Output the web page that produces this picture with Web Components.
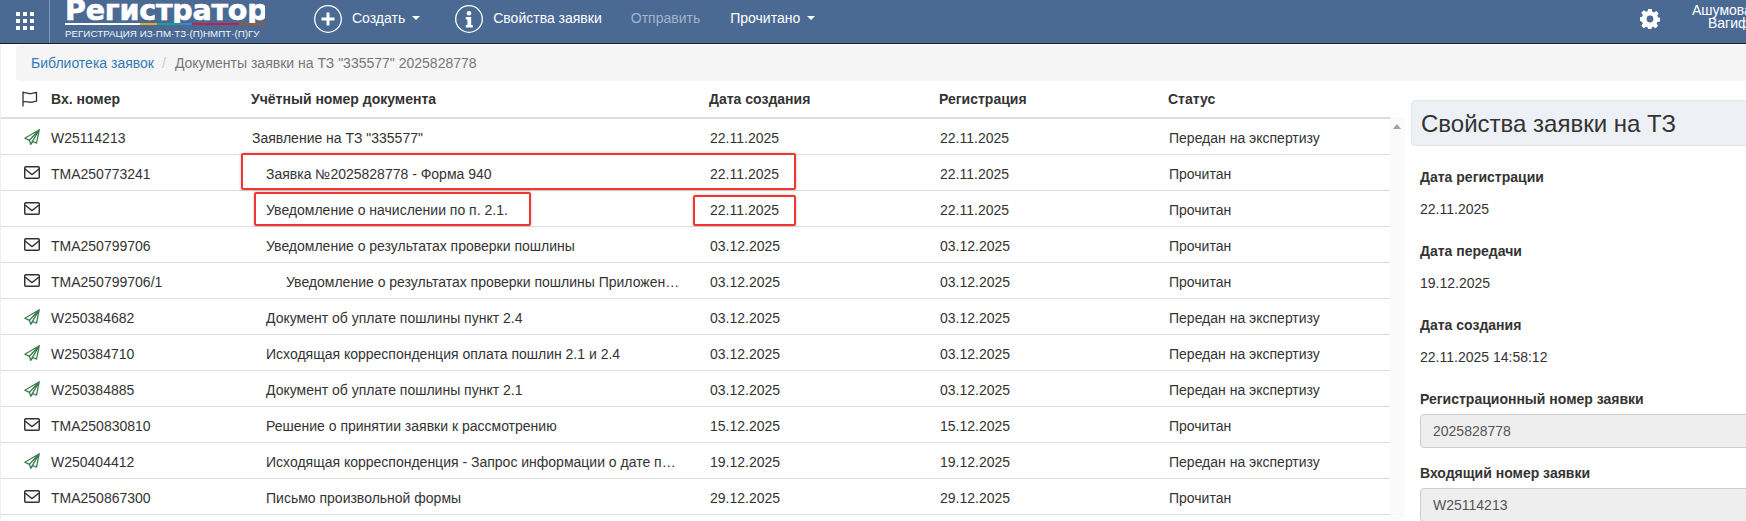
<!DOCTYPE html>
<html lang="ru">
<head>
<meta charset="utf-8">
<title>Документы заявки</title>
<style>
    html, body { margin: 0; height: 521px; overflow: hidden; background: #fff; }
    body { font: 14px/20px "Liberation Sans", Arial, sans-serif; color: #333; }
</style>
</head>
<body>
<app-page>
    <app-header slot="header"></app-header>
    <crumb-bar slot="crumbs">Документы заявки на ТЗ "335577" 2025828778</crumb-bar>
    <doc-table slot="table">
        <doc-row icon="plane" num="W25114213" doc='Заявление на ТЗ "335577"' level="0" date="22.11.2025" reg="22.11.2025" status="Передан на экспертизу"></doc-row>
        <doc-row icon="mail" num="TMA250773241" doc="Заявка №2025828778 - Форма 940" level="1" date="22.11.2025" reg="22.11.2025" status="Прочитан"></doc-row>
        <doc-row icon="mail" num="" doc="Уведомление о начислении по п. 2.1." level="1" date="22.11.2025" reg="22.11.2025" status="Прочитан"></doc-row>
        <doc-row icon="mail" num="TMA250799706" doc="Уведомление о результатах проверки пошлины" level="1" date="03.12.2025" reg="03.12.2025" status="Прочитан"></doc-row>
        <doc-row icon="mail" num="TMA250799706/1" doc="Уведомление о результатах проверки пошлины Приложение к уведомлению" level="2" date="03.12.2025" reg="03.12.2025" status="Прочитан"></doc-row>
        <doc-row icon="plane" num="W250384682" doc="Документ об уплате пошлины пункт 2.4" level="1" date="03.12.2025" reg="03.12.2025" status="Передан на экспертизу"></doc-row>
        <doc-row icon="plane" num="W250384710" doc="Исходящая корреспонденция оплата пошлин 2.1 и 2.4" level="1" date="03.12.2025" reg="03.12.2025" status="Передан на экспертизу"></doc-row>
        <doc-row icon="plane" num="W250384885" doc="Документ об уплате пошлины пункт 2.1" level="1" date="03.12.2025" reg="03.12.2025" status="Передан на экспертизу"></doc-row>
        <doc-row icon="mail" num="TMA250830810" doc="Решение о принятии заявки к рассмотрению" level="1" date="15.12.2025" reg="15.12.2025" status="Прочитан"></doc-row>
        <doc-row icon="plane" num="W250404412" doc="Исходящая корреспонденция - Запрос информации о дате подачи заявки" level="1" date="19.12.2025" reg="19.12.2025" status="Передан на экспертизу"></doc-row>
        <doc-row icon="mail" num="TMA250867300" doc="Письмо произвольной формы" level="1" date="29.12.2025" reg="29.12.2025" status="Прочитан"></doc-row>
    </doc-table>
    <props-panel slot="panel" heading="Свойства заявки на ТЗ">
        <prop-text label="Дата регистрации" value="22.11.2025"></prop-text>
        <prop-text label="Дата передачи" value="19.12.2025"></prop-text>
        <prop-text label="Дата создания" value="22.11.2025 14:58:12"></prop-text>
        <prop-input label="Регистрационный номер заявки" value="2025828778"></prop-input>
        <prop-input label="Входящий номер заявки" value="W25114213"></prop-input>
    </props-panel>
    <red-box slot="marks" style="left:241px;top:153px;width:555px;height:37px"></red-box>
    <red-box slot="marks" style="left:254px;top:192px;width:277px;height:34px"></red-box>
    <red-box slot="marks" style="left:693px;top:195px;width:103px;height:31px"></red-box>
</app-page>

<script>
class AppPage extends HTMLElement {
    constructor() {
        super();
        this.attachShadow({ mode: 'open' });
        this.shadowRoot.innerHTML = `
            <style>
                :host { display: block; position: relative; width: 1746px; height: 521px; overflow: hidden; }
                .strip { border-left: 1px solid #e6f1fa; height: 477px; display: flex; flex-direction: column; }
                .content { display: flex; align-items: flex-start; }
                .gutter { flex: none; width: 21px; }
            </style>
            <slot name="header"></slot>
            <div class="strip">
                <slot name="crumbs"></slot>
                <div class="content">
                    <slot name="table"></slot>
                    <div class="gutter"></div>
                    <slot name="panel"></slot>
                </div>
            </div>
            <slot name="marks"></slot>
        `;
    }
}

class AppHeader extends HTMLElement {
    constructor() {
        super();
        this.attachShadow({ mode: 'open' });
        this.shadowRoot.innerHTML = `
            <style>
                :host { display: flex; align-items: center; height: 43px; background: #4a6a94; border-bottom: 1px solid #14202e; color: #fff; overflow: hidden; }
                .apps { flex: none; width: 49px; height: 43px; border-right: 1px solid #7e96b5; display: flex; align-items: center; box-sizing: content-box; }
                .apps svg { margin-left: 16px; margin-top: -1px; }
                .logo { flex: none; width: 200px; margin-left: 15px; height: 43px; overflow: hidden; }
                .word { font: bold 28.5px/22px "DejaVu Sans", sans-serif; -webkit-text-stroke: .6px #fff; white-space: nowrap; height: 23px; overflow: hidden; letter-spacing: -.2px; }
                .bar { height: 2px; background: linear-gradient(to right, #fff 0 75px, #e5ad1e 75px 92px, #17a09b 92px 116px, #3c86d3 116px 127px, #c41c50 127px 174px, #a5552f 174px); }
                .sub { font-size: 9.8px; line-height: 12px; margin-top: 3px; white-space: nowrap; color: #f2f5f9; }
                .item { flex: none; display: flex; align-items: center; white-space: nowrap; margin-top: -7px; }
                .item svg { flex: none; margin-right: 10px; margin-top: 1px; }
                .caret { width: 0; height: 0; border: 4px solid transparent; border-top-color: #fff; border-bottom: 0; margin-left: 7px; }
                .muted { color: #a3b3c8; }
                .create { margin-left: 49px; }
                .props { margin-left: 35px; }
                .send { margin-left: 29px; }
                .read { margin-left: 30px; }
                .gear { flex: none; margin-left: auto; margin-right: 32px; margin-top: -5px; }
                .user { flex: none; width: 54px; overflow: hidden; font-size: 14px; line-height: 13px; white-space: nowrap; margin-top: -10px; }
                .user span { display: block; }
                .user span + span { margin-left: 16px; }
            </style>
            <div class="apps">
                <svg width="18" height="18" viewBox="0 0 18 18" fill="#fff">
                    <rect x="0" y="0" width="4" height="4"/><rect x="7" y="0" width="4" height="4"/><rect x="14" y="0" width="4" height="4"/>
                    <rect x="0" y="7" width="4" height="4"/><rect x="7" y="7" width="4" height="4"/><rect x="14" y="7" width="4" height="4"/>
                    <rect x="0" y="14" width="4" height="4"/><rect x="7" y="14" width="4" height="4"/><rect x="14" y="14" width="4" height="4"/>
                </svg>
            </div>
            <div class="logo">
                <div class="word">Регистратор</div>
                <div class="bar"></div>
                <div class="sub">РЕГИСТРАЦИЯ ИЗ·ПМ·ТЗ·(П)НМПТ·(П)ГУ</div>
            </div>
            <div class="item create">
                <svg width="28" height="28" viewBox="0 0 28 28" fill="none" stroke="#fff">
                    <circle cx="14" cy="14" r="13.3" stroke-width="1.3"/>
                    <path d="M14 7.5v13M7.5 14h13" stroke-width="3"/>
                </svg>
                Создать<span class="caret"></span>
            </div>
            <div class="item props">
                <svg width="28" height="28" viewBox="0 0 28 28" fill="none">
                    <circle cx="14" cy="14" r="13.3" stroke="#fff" stroke-width="1.3"/>
                    <circle cx="14" cy="8.2" r="2.3" fill="#fff"/>
                    <path d="M10.8 12h5.4v8h1.6v2.4h-7v-2.4h1.6v-5.6h-1.6z" fill="#fff"/>
                </svg>
                Свойства заявки
            </div>
            <div class="item send muted">Отправить</div>
            <div class="item read">Прочитано<span class="caret"></span></div>
            <svg class="gear" width="20" height="20" viewBox="0 0 20 20" fill="#fff">
                <path fill-rule="evenodd" d="M8.2 0h3.6l.5 2.7 1.6.7 2.3-1.5 2.5 2.5-1.5 2.3.7 1.6 2.1.5v3.6l-2.7.5-.7 1.6 1.5 2.3-2.5 2.5-2.3-1.5-1.6.7-.5 2.7H8.2l-.5-2.7-1.6-.7-2.3 1.5-2.5-2.5 1.5-2.3-.7-1.6L0 11.8V8.2l2.1-.5.7-1.6-1.5-2.3 2.5-2.5 2.3 1.5 1.6-.7zM10 6.6a3.4 3.4 0 1 0 0 6.8 3.4 3.4 0 0 0 0-6.8z"/>
            </svg>
            <div class="user"><span>Ашумова</span><span>Вагиф</span></div>
        `;
    }
}

class CrumbBar extends HTMLElement {
    constructor() {
        super();
        this.attachShadow({ mode: 'open' });
        this.shadowRoot.innerHTML = `
            <style>
                :host { display: flex; align-items: center; flex: none; height: 36px; margin: 1px -10px 0 15px; padding-left: 15px; background: #f5f5f5; border-radius: 4px; color: #777; white-space: nowrap; }
                a { color: #337ab7; text-decoration: none; }
                .sep { color: #ccc; padding: 0 9px 0 8px; }
            </style>
            <a href="#">Библиотека заявок</a><span class="sep">/</span><slot></slot>
        `;
    }
}

class DocTable extends HTMLElement {
    constructor() {
        super();
        this.attachShadow({ mode: 'open' });
        this.shadowRoot.innerHTML = `
            <style>
                :host { --cols: 50px 200px 458px 230px 229px 222px; display: block; flex: none; width: 1389px; position: relative; }
                .head { display: grid; grid-template-columns: var(--cols); align-items: center; height: 36px; border-bottom: 2px solid #ddd; font-weight: bold; }
                .flag { padding-left: 21px; display: flex; }
                .scroll { position: absolute; left: 1389px; top: 36px; width: 15px; height: 402px; background: #fafafa; }
                .scroll i { position: absolute; left: 3px; top: 7px; width: 0; height: 0; border: 4.5px solid transparent; border-top: 0; border-bottom: 5px solid #a3a3a3; }
            </style>
            <div class="head">
                <div class="flag">
                    <svg width="16" height="16" viewBox="0 0 16 16" fill="none" stroke="#333" stroke-width="1.3">
                        <path d="M1 0.5v15M1 2c3-1.500 5 1 8 .6 2.300-.3 4-1 5.500-1.100v8.600c-2 .2-3.200 1-5.500 1.100-3 .3-5-1.400-8-.2"/>
                    </svg>
                </div>
                <div>Вх. номер</div>
                <div>Учётный номер документа</div>
                <div>Дата создания</div>
                <div>Регистрация</div>
                <div>Статус</div>
            </div>
            <slot></slot>
            <div class="scroll"><i></i></div>
        `;
    }
}

const docIcons = {
    plane: `<svg width="16" height="16" viewBox="0 0 16 16" fill="none" stroke="#3f7f52" stroke-width="1.3" stroke-linejoin="round">
        <path d="M15.300.7.800 9.200l4.600 2.100 1.300 4 2.300-2.800 3.500 1.600zM15.300.7 5.400 11.300M15.300.7 6.700 15.300"/>
    </svg>`,
    mail: `<svg width="16" height="13" viewBox="0 0 16 13" fill="none" stroke="#333" stroke-width="1.500">
        <rect x=".75" y=".75" width="14.500" height="11.500" rx="1"/>
        <path d="M1 3l7 5.500L15 3"/>
    </svg>`
};

class DocRow extends HTMLElement {
    constructor() {
        super();
        this.attachShadow({ mode: 'open' });
        this.shadowRoot.innerHTML = `
            <style>
                :host { display: grid; grid-template-columns: var(--cols); align-items: center; height: 35px; border-bottom: 1px solid #ddd; }
                .ico { padding-left: 23px; display: flex; }
                .doc { white-space: nowrap; overflow: hidden; text-overflow: ellipsis; padding-right: 27px; }
                .cell { padding-left: 1px; }
                .num, .doc, .cell { padding-top: 2px; }
            </style>
            <div class="ico"></div>
            <div class="num"></div>
            <div class="doc"></div>
            <div class="cell date"></div>
            <div class="cell reg"></div>
            <div class="cell status"></div>
        `;
    }

    connectedCallback() {
        const root = this.shadowRoot;
        root.querySelector('.ico').innerHTML = docIcons[this.getAttribute('icon')];
        root.querySelector('.num').textContent = this.getAttribute('num');
        const doc = root.querySelector('.doc');
        doc.textContent = this.getAttribute('doc');
        doc.style.paddingLeft = [1, 15, 35][Number(this.getAttribute('level'))] + 'px';
        root.querySelector('.date').textContent = this.getAttribute('date');
        root.querySelector('.reg').textContent = this.getAttribute('reg');
        root.querySelector('.status').textContent = this.getAttribute('status');
    }
}

class PropsPanel extends HTMLElement {
    constructor() {
        super();
        this.attachShadow({ mode: 'open' });
        this.shadowRoot.innerHTML = `
            <style>
                :host { display: block; flex: none; width: 420px; padding-top: 19px; }
                h2 { margin: 0; height: 44px; line-height: 46px; padding-left: 9px; font-size: 24px; font-weight: normal; color: #333; background: #edf0f5; border: 1px solid #e3e6eb; border-radius: 4px; }
                .body { padding: 21px 0 0 9px; }
            </style>
            <h2></h2>
            <div class="body"><slot></slot></div>
        `;
        this.shadowRoot.querySelector('h2').textContent = this.getAttribute('heading');
    }
}

class PropText extends HTMLElement {
    constructor() {
        super();
        this.attachShadow({ mode: 'open' });
        this.shadowRoot.innerHTML = `
            <style>
                :host { display: block; height: 74px; }
                b { display: block; margin-bottom: 12px; }
            </style>
            <b></b><div></div>
        `;
        this.shadowRoot.querySelector('b').textContent = this.getAttribute('label');
        this.shadowRoot.querySelector('div').textContent = this.getAttribute('value');
    }
}

class PropInput extends HTMLElement {
    constructor() {
        super();
        this.attachShadow({ mode: 'open' });
        this.shadowRoot.innerHTML = `
            <style>
                :host { display: block; margin-bottom: 15px; }
                b { display: block; margin-bottom: 5px; }
                div { box-sizing: border-box; height: 34px; line-height: 32px; padding-left: 12px; background: #eee; border: 1px solid #ccc; border-radius: 4px; color: #555; }
            </style>
            <b></b><div></div>
        `;
        this.shadowRoot.querySelector('b').textContent = this.getAttribute('label');
        this.shadowRoot.querySelector('div').textContent = this.getAttribute('value');
    }
}

// red marks drawn over the screenshot, so they sit on a free canvas
class RedBox extends HTMLElement {
    constructor() {
        super();
        this.attachShadow({ mode: 'open' });
        this.shadowRoot.innerHTML = `
            <style>
                :host { display: block; position: absolute; box-sizing: border-box; border: 2px solid #f4352f; border-radius: 2px; box-shadow: 0 0 3px rgba(0,0,0,.25); }
            </style>
        `;
    }
}

customElements.define('app-page', AppPage);
customElements.define('app-header', AppHeader);
customElements.define('crumb-bar', CrumbBar);
customElements.define('doc-table', DocTable);
customElements.define('doc-row', DocRow);
customElements.define('props-panel', PropsPanel);
customElements.define('prop-text', PropText);
customElements.define('prop-input', PropInput);
customElements.define('red-box', RedBox);
</script>
</body>
</html>
